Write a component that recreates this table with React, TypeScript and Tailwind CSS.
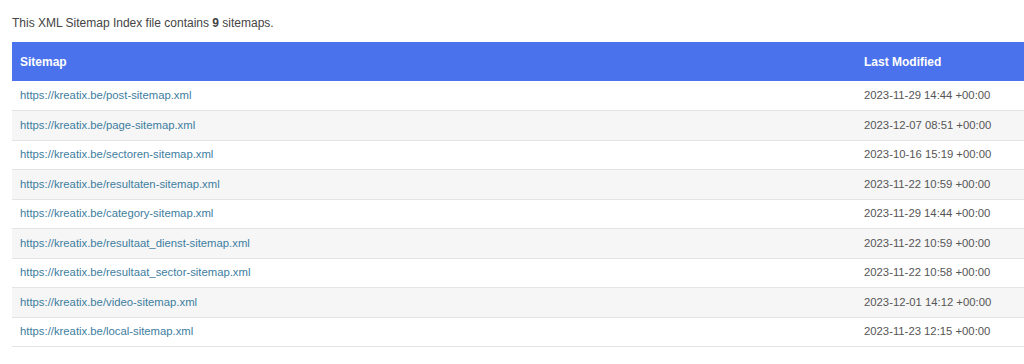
import React from 'react';

const sitemaps = [
    ['https://kreatix.be/post-sitemap.xml', '2023-11-29 14:44 +00:00'],
    ['https://kreatix.be/page-sitemap.xml', '2023-12-07 08:51 +00:00'],
    ['https://kreatix.be/sectoren-sitemap.xml', '2023-10-16 15:19 +00:00'],
    ['https://kreatix.be/resultaten-sitemap.xml', '2023-11-22 10:59 +00:00'],
    ['https://kreatix.be/category-sitemap.xml', '2023-11-29 14:44 +00:00'],
    ['https://kreatix.be/resultaat_dienst-sitemap.xml', '2023-11-22 10:59 +00:00'],
    ['https://kreatix.be/resultaat_sector-sitemap.xml', '2023-11-22 10:58 +00:00'],
    ['https://kreatix.be/video-sitemap.xml', '2023-12-01 14:12 +00:00'],
    ['https://kreatix.be/local-sitemap.xml', '2023-11-23 12:15 +00:00'],
];

export default function App() {
    return (
        <div className="w-[1024px] h-[364px] bg-white pl-3 pt-[14px] font-['Liberation_Sans',Arial,sans-serif] overflow-hidden">
            <p className="text-[#444] text-[12px] leading-[18px] mb-[10px]">
                This XML Sitemap Index file contains <strong className="font-bold">9</strong> sitemaps.
            </p>
            <table className="w-[1012px] border-collapse">
                <thead>
                    <tr className="bg-[#4a72ec] text-white h-[39px] text-[12px]">
                        <th className="text-left font-bold pl-2">Sitemap</th>
                        <th className="text-left font-bold w-[160px]">Last Modified</th>
                    </tr>
                </thead>
                <tbody>
                    {sitemaps.map(([url, date], i) => (
                        <tr key={url} className={`h-[29.5px] border-b border-[#e4e4e4] text-[11.3px] ${i % 2 ? 'bg-[#f6f6f6]' : 'bg-white'}`}>
                            <td className="pl-2 text-[#3d7da0]">{url}</td>
                            <td className="text-[#555]">{date}</td>
                        </tr>
                    ))}
                </tbody>
            </table>
        </div>
    );
}
